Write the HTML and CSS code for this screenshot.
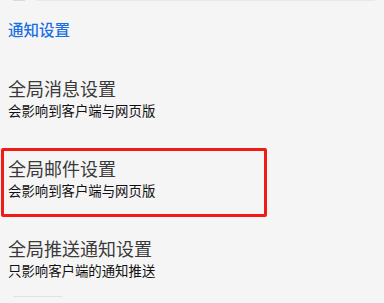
FILE: index.html
```html
<!DOCTYPE html>
<html lang="zh">
<head>
<meta charset="utf-8">
<link rel="stylesheet" href="styles.css">
</head>
<body>
<div class="page">
  <div class="topline"><span class="seg-a"></span><span class="seg-b"></span></div>
  <div class="header">通知设置</div>
  <div class="item">
    <div class="title">全局消息设置</div>
    <div class="sub">会影响到客户端与网页版</div>
  </div>
  <div class="item item-marked">
    <div class="title">全局邮件设置</div>
    <div class="sub">会影响到客户端与网页版</div>
  </div>
  <div class="item item-last">
    <div class="title">全局推送通知设置</div>
    <div class="sub">只影响客户端的通知推送</div>
  </div>
  <div class="rule"></div>
</div>
</body>
</html>
```
FILE: styles.css
```css
html, body {
  margin: 0;
  padding: 0;
  background: #f5f5f5;
}
body {
  font-family: "Noto Sans CJK SC", "Noto Sans", sans-serif;
  width: 384px;
  height: 303px;
  overflow: hidden;
}
.page {
  display: flex;
  flex-direction: column;
}
.topline {
  display: flex;
  height: 1px;
}
.seg-a {
  margin-left: 13px;
  width: 12px;
  background: #dadada;
}
.seg-b {
  margin-left: 12px;
  width: 338px;
  background: #e8e8e8;
}
.header {
  margin-top: 18px;
  padding-left: 8px;
  font-size: 15.5px;
  font-weight: 500;
  line-height: 20px;
  color: #1a6fe3;
  height: 49px;
}
.item {
  position: relative;
  height: 80px;
  box-sizing: border-box;
  padding: 9px 8px 0 8px;
}
.item-last {
  height: 68px;
}
.title {
  font-size: 18px;
  line-height: 22px;
  color: #3a3a3a;
}
.sub {
  margin-top: 2px;
  font-size: 13.4px;
  line-height: 18px;
  color: #111;
}
.item-marked::after {
  content: "";
  position: absolute;
  left: 1px;
  top: 0;
  width: 266px;
  height: 69px;
  box-sizing: border-box;
  border: 3px solid #f21a14;
  border-radius: 2px;
}
.rule {
  margin-left: 13px;
  width: 49px;
  height: 1px;
  background: #e2e2e2;
}
```
